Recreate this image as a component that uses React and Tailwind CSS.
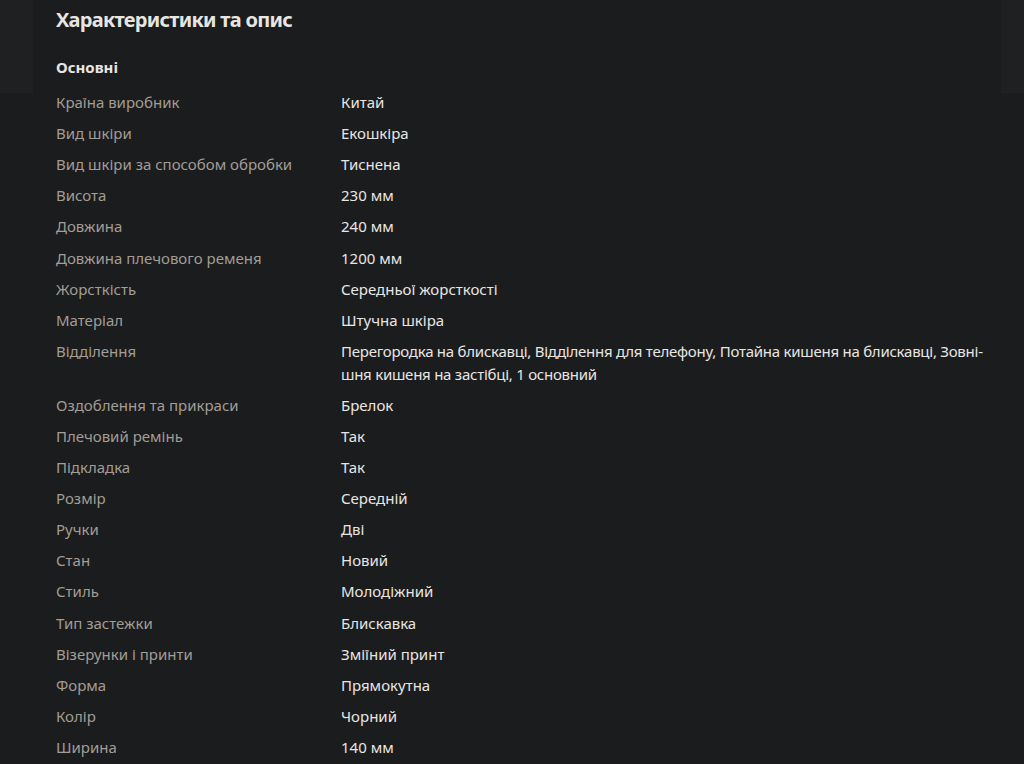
import React from 'react';

const specs = [
  ['Країна виробник', 'Китай'],
  ['Вид шкіри', 'Екошкіра'],
  ['Вид шкіри за способом обробки', 'Тиснена'],
  ['Висота', '230 мм'],
  ['Довжина', '240 мм'],
  ['Довжина плечового ременя', '1200 мм'],
  ['Жорсткість', 'Середньої жорсткості'],
  ['Матеріал', 'Штучна шкіра'],
  ['Відділення', ['Перегородка на блискавці, Відділення для телефону, Потайна кишеня на блискавці, Зовні-', 'шня кишеня на застібці, 1 основний']],
  ['Оздоблення та прикраси', 'Брелок'],
  ['Плечовий ремінь', 'Так'],
  ['Підкладка', 'Так'],
  ['Розмір', 'Середній'],
  ['Ручки', 'Дві'],
  ['Стан', 'Новий'],
  ['Стиль', 'Молодіжний'],
  ['Тип застежки', 'Блискавка'],
  ['Візерунки і принти', 'Зміїний принт'],
  ['Форма', 'Прямокутна'],
  ['Колір', 'Чорний'],
  ['Ширина', '140 мм'],
];

const App = () => {
  return (
    <div
      className="min-h-[764px] bg-[linear-gradient(to_bottom,#1f2022_93px,#1b1c1e_93px)]"
      style={{ fontFamily: '"Segoe UI", "Noto Sans", sans-serif' }}
    >
      <div className="mx-[33px] w-[968px] bg-[#1b1c1e] px-[23px] pt-[6px] pb-4 text-[15px]">
        <h2 className="text-[20px] leading-[28px] font-bold tracking-[-0.7px] text-[#e8e6e3]">Характеристики та опис</h2>
        <h3 className="mt-[22px] leading-[23px] font-bold text-[#e8e6e3]">Основні</h3>

        <dl className="mt-2">
          {specs.map(([label, value]) => (
            <div key={label} className="flex py-[4.05px] leading-[23px]">
              <dt className="w-[285px] shrink-0 text-[#a29d95]">{label}</dt>
              <dd className="text-[#e8e6e3]">
                {Array.isArray(value)
                  ? value.map((line) => (
                      <div key={line} className="whitespace-nowrap tracking-[-0.25px]">{line}</div>
                    ))
                  : value}
              </dd>
            </div>
          ))}
        </dl>
      </div>
    </div>
  );
};

export default App;
